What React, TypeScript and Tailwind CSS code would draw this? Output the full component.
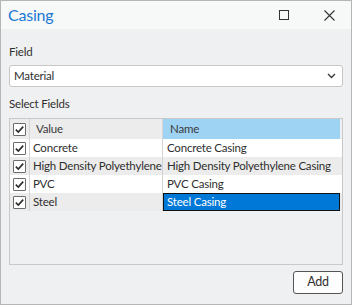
import React from "react";

const font = { fontFamily: 'Lato, "Noto Sans", sans-serif' };

function Check() {
  return (
    <div className="w-[13px] h-[13px] border border-[#6b6b6b] bg-white rounded-[1px] flex items-center justify-center">
      <svg width="11" height="11" viewBox="0 0 11 11">
        <path d="M1.8 5.6 L4.3 8 L9.2 2.6" fill="none" stroke="#2b2b2b" strokeWidth="1.6" />
      </svg>
    </div>
  );
}

const rows = [
  { v: "Concrete", n: "Concrete Casing", bg: "bg-white" },
  { v: "High Density Polyethylene", n: "High Density Polyethylene Casing", bg: "bg-[#ececec]" },
  { v: "PVC", n: "PVC Casing", bg: "bg-white" },
  { v: "Steel", n: "Steel Casing", bg: "bg-[#ececec]", sel: true },
];

export default function App() {
  return (
    <div style={font} className="w-[352px] h-[305px] border border-[#b5b5b5] bg-[#eff0f1] flex flex-col text-[11.5px] tracking-[-0.2px] text-[#2f2f2f]">
      <div className="h-[28px] bg-[#f7f8f8] flex items-center pl-[7px] pr-[16px]">
        <span className="text-[16px] tracking-[-0.2px] text-[#1a78d4] leading-none">Casing</span>
        <div className="ml-auto flex items-center gap-[34px]">
          <svg width="11" height="11" viewBox="0 0 11 11">
            <rect x="0.5" y="0.5" width="9" height="9" fill="none" stroke="#333" strokeWidth="1" />
          </svg>
          <svg width="11" height="11" viewBox="0 0 11 11">
            <path d="M0.5 0.5 L10.5 10.5 M10.5 0.5 L0.5 10.5" fill="none" stroke="#333" strokeWidth="1.1" />
          </svg>
        </div>
      </div>
      <div className="flex-1 flex flex-col px-[8px] pt-[15px] pb-[9px]">
        <div className="h-[16px] leading-[16px]">Field</div>
        <div className="mt-[5px] h-[22px] bg-white border border-[#c7c7c7] rounded-[3px] flex items-center pl-[4px] pr-[6px]">
          <span>Material</span>
          <svg className="ml-auto" width="9" height="6" viewBox="0 0 9 6">
            <path d="M1 1 L4.5 4.5 L8 1" fill="none" stroke="#333" strokeWidth="1.3" />
          </svg>
        </div>
        <div className="mt-[9px] h-[16px] leading-[16px]">Select Fields</div>
        <div className="mt-[6px] h-[147px] border border-[#c9c9c9] bg-[#eff0f1] flex flex-col">
          <div className="h-[20px] flex">
            <div className="w-[20px] bg-[#ececec] border-r border-[#d4d4d4] flex items-center justify-center">
              <Check />
            </div>
            <div className="w-[133px] bg-[#ececec] border-r border-[#d4d4d4] flex items-center pl-[6px] text-[#3a3a3a]">Value</div>
            <div className="w-[177px] bg-[#9fd3f3] flex items-center pl-[7px] text-[#3a3a3a]">Name</div>
          </div>
          {rows.map((r) => (
            <div key={r.v} className={`h-[18px] flex ${r.bg}`}>
              <div className="w-[20px] border-r border-[#d4d4d4] flex items-center justify-center">
                <Check />
              </div>
              <div className="w-[133px] border-r border-[#d4d4d4] flex items-center pl-[3px] whitespace-nowrap overflow-hidden">{r.v}</div>
              {r.sel ? (
                <div className="w-[177px] bg-[#0078d7] border border-[#111] flex items-center pl-[3px] text-white whitespace-nowrap">{r.n}</div>
              ) : (
                <div className="w-[177px] flex items-center pl-[4px] whitespace-nowrap">{r.n}</div>
              )}
            </div>
          ))}
        </div>
        <div className="mt-[6px] flex justify-end">
          <div className="w-[50px] h-[23px] bg-[#fdfdfd] border border-[#555] rounded-[3px] flex items-center justify-center text-[12.5px]">Add</div>
        </div>
      </div>
    </div>
  );
}
